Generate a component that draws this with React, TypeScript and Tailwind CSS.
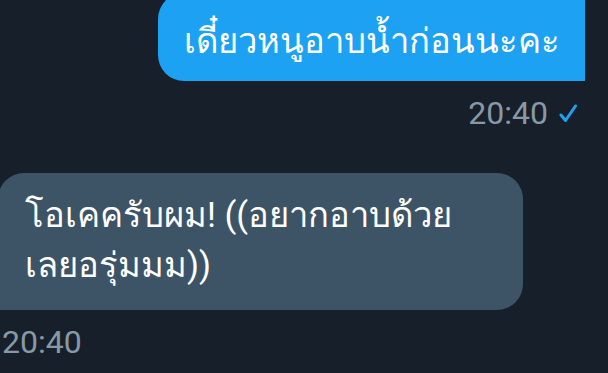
export default function App() {
  return (
    <div
      className="w-[608px] h-[373px] overflow-hidden bg-[#17202a] text-white"
      style={{ fontFamily: 'Roboto, "Noto Sans", sans-serif' }}
    >
      {/* outgoing */}
      <div className="flex justify-end pr-[23px] -mt-[7px]">
        <div className="h-[88px] flex items-center pl-[26px] pr-[25px] pt-[8px] bg-[#1da1f2] rounded-l-[26px] text-[34.6px] leading-none whitespace-nowrap">
          เดี๋ยวหนูอาบน้ำก่อนนะคะ
        </div>
      </div>
      <div className="flex justify-end items-center gap-[11px] pr-[31px] mt-[14px] text-[#8899a6] text-[32px] leading-[36px]">
        <span>20:40</span>
        <svg width="18" height="19" viewBox="0 0 18 19" fill="none" stroke="#1da1f2" strokeWidth="3" strokeLinecap="round" strokeLinejoin="round">
          <path d="M2 11 L6.5 16.5 L16.5 2" />
        </svg>
      </div>

      {/* incoming */}
      <div className="flex mt-[42px]">
        <div className="-ml-[2px] w-[525px] h-[137px] pl-[27px] pr-[20px] pt-[17px] bg-[#3d5466] rounded-[26px] rounded-bl-none text-[34.6px] leading-[50px]">
          โอเคครับผม! ((อยากอาบด้วย
          <br />
          เลยอรุ่มมม))
        </div>
      </div>
      <div className="pl-[2px] mt-[14px] text-[#8899a6] text-[32px] leading-[36px]">20:40</div>
    </div>
  );
}
